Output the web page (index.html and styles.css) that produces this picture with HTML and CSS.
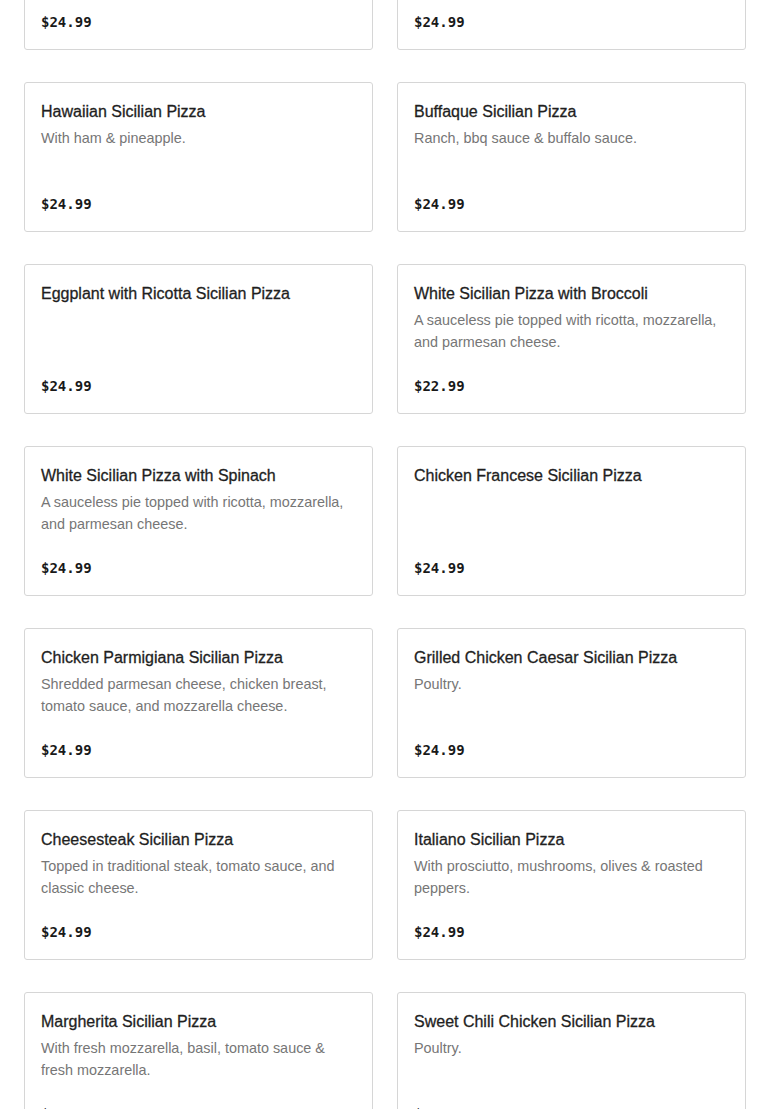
FILE: index.html
```html
<!DOCTYPE html>
<html>
<head>
<meta charset="utf-8">
<link rel="stylesheet" href="styles.css">
</head>
<body>
<div class="grid">
  <div class="card"><div class="price">$24.99</div></div>
  <div class="card"><div class="price">$24.99</div></div>

  <div class="card"><div class="title">Hawaiian Sicilian Pizza</div><div class="desc">With ham &amp; pineapple.</div><div class="price">$24.99</div></div>
  <div class="card"><div class="title">Buffaque Sicilian Pizza</div><div class="desc">Ranch, bbq sauce &amp; buffalo sauce.</div><div class="price">$24.99</div></div>

  <div class="card"><div class="title">Eggplant with Ricotta Sicilian Pizza</div><div class="desc"></div><div class="price">$24.99</div></div>
  <div class="card"><div class="title">White Sicilian Pizza with Broccoli</div><div class="desc">A sauceless pie topped with ricotta, mozzarella, and parmesan cheese.</div><div class="price">$22.99</div></div>

  <div class="card"><div class="title">White Sicilian Pizza with Spinach</div><div class="desc">A sauceless pie topped with ricotta, mozzarella, and parmesan cheese.</div><div class="price">$24.99</div></div>
  <div class="card"><div class="title">Chicken Francese Sicilian Pizza</div><div class="desc"></div><div class="price">$24.99</div></div>

  <div class="card"><div class="title">Chicken Parmigiana Sicilian Pizza</div><div class="desc">Shredded parmesan cheese, chicken breast, tomato sauce, and mozzarella cheese.</div><div class="price">$24.99</div></div>
  <div class="card"><div class="title">Grilled Chicken Caesar Sicilian Pizza</div><div class="desc">Poultry.</div><div class="price">$24.99</div></div>

  <div class="card"><div class="title">Cheesesteak Sicilian Pizza</div><div class="desc">Topped in traditional steak, tomato sauce, and classic cheese.</div><div class="price">$24.99</div></div>
  <div class="card"><div class="title">Italiano Sicilian Pizza</div><div class="desc">With prosciutto, mushrooms, olives &amp; roasted peppers.</div><div class="price">$24.99</div></div>

  <div class="card"><div class="title">Margherita Sicilian Pizza</div><div class="desc">With fresh mozzarella, basil, tomato sauce &amp; fresh mozzarella.</div><div class="price">$24.99</div></div>
  <div class="card"><div class="title">Sweet Chili Chicken Sicilian Pizza</div><div class="desc">Poultry.</div><div class="price">$24.99</div></div>
</div>
</body>
</html>
```
FILE: styles.css
```css
html, body {
  margin: 0;
  padding: 0;
  background: #ffffff;
  overflow: hidden;
}
body {
  font-family: "Liberation Sans", Arial, sans-serif;
  color: #191919;
}
.grid {
  display: grid;
  grid-template-columns: 349px 349px;
  column-gap: 24px;
  row-gap: 32px;
  padding: 0 24px;
  margin-top: -100px;
}
.card {
  box-sizing: border-box;
  height: 150px;
  border: 1px solid #d6d6d6;
  border-radius: 3px;
  padding: 17px 16px 16px;
  display: flex;
  flex-direction: column;
}
.title {
  font-size: 16px;
  line-height: 24px;
  font-weight: 500;
  color: #1f1f1f;
  -webkit-text-stroke: 0.3px #1f1f1f;
}
.desc {
  margin-top: 3px;
  font-size: 14.4px;
  line-height: 22px;
  color: #767676;
}
.price {
  margin-top: auto;
  font-family: "DejaVu Sans Mono", "Liberation Mono", monospace;
  font-weight: bold;
  font-size: 14px;
  line-height: 26px;
  margin-bottom: -2px;
  color: #191919;
}
```
